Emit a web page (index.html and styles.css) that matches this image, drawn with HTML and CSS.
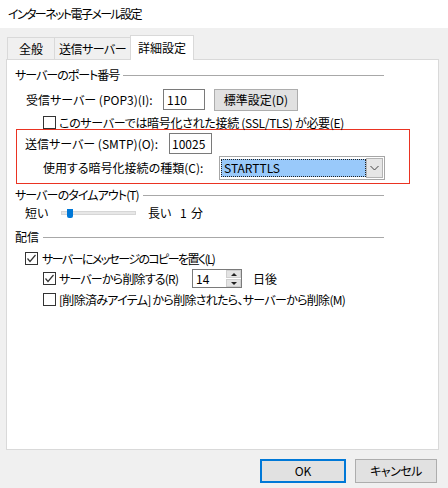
FILE: index.html
```html
<!DOCTYPE html>
<html lang="ja">
<head>
<meta charset="utf-8">
<title>インターネット電子メール設定</title>
<link rel="stylesheet" href="styles.css">
</head>
<body>
<div class="window">
  <div class="titlebar">インターネット電子メール設定</div>
  <div class="tabs">
    <div class="tab tab-general">全般</div>
    <div class="tab tab-send">送信サーバー</div>
    <div class="tab tab-adv active">詳細設定</div>
  </div>
  <div class="panel">
    <div class="gh gh-port"><span>サーバーのポート番号</span><i class="rule"></i></div>
    <div class="row row-pop">
      <span class="lbl lbl-pop">受信サーバー (POP3)(I):</span>
      <div class="txt txt-pop">110</div>
      <div class="btn btn-std">標準設定(D)</div>
    </div>
    <div class="row row-ssl">
      <span class="cb"></span><span class="cbl">このサーバーでは暗号化された接続 (SSL/TLS) が必要(E)</span>
    </div>
    <div class="redbox">
      <div class="row row-smtp">
        <span class="lbl lbl-smtp">送信サーバー (SMTP)(O):</span>
        <div class="txt txt-smtp">10025</div>
      </div>
      <div class="row row-enc">
        <span class="lbl lbl-enc">使用する暗号化接続の種類(C):</span>
        <div class="select">
          <div class="sel-field">STARTTLS</div>
          <div class="sel-btn"><svg width="9" height="6" viewBox="0 0 9 6"><polyline points="0.5,1 4.5,5 8.5,1" fill="none" stroke="#444" stroke-width="1"/></svg></div>
        </div>
      </div>
    </div>
    <div class="gh gh-timeout"><span>サーバーのタイムアウト(T)</span><i class="rule"></i></div>
    <div class="row row-slider">
      <span class="lbl lbl-short">短い</span>
      <div class="track"><span class="thumb"></span></div>
      <span class="lbl lbl-long">長い</span>
      <span class="lbl lbl-one">1</span>
      <span class="lbl lbl-min">分</span>
    </div>
    <div class="gh gh-deliv"><span>配信</span><i class="rule"></i></div>
    <div class="row row-copy">
      <span class="cb checked"><svg width="11" height="11" viewBox="0 0 11 11"><polyline points="1.5,5.5 4,8.5 9.5,2" fill="none" stroke="#333" stroke-width="1.2"/></svg></span><span class="cbl">サーバーにメッセージのコピーを置く(L)</span>
    </div>
    <div class="row row-del">
      <span class="cb checked"><svg width="11" height="11" viewBox="0 0 11 11"><polyline points="1.5,5.5 4,8.5 9.5,2" fill="none" stroke="#333" stroke-width="1.2"/></svg></span><span class="cbl cbl-del">サーバーから削除する(R)</span>
      <div class="spin">
        <div class="spin-val">14</div>
        <div class="spin-btns">
          <div class="spin-b"><i class="tri-up"></i></div>
          <div class="spin-b"><i class="tri-down"></i></div>
        </div>
      </div>
      <span class="lbl lbl-days">日後</span>
    </div>
    <div class="row row-trash">
      <span class="cb"></span><span class="cbl">[削除済みアイテム] から削除されたら、サーバーから削除(M)</span>
    </div>
  </div>
  <div class="footer">
    <div class="btn btn-ok">OK</div>
    <div class="btn btn-cancel">キャンセル</div>
  </div>
</div>
</body>
</html>
```
FILE: styles.css
```css
html, body {
  margin: 0;
  padding: 0;
}
body {
  width: 448px;
  height: 488px;
  overflow: hidden;
  background: #f0f0f0;
  color: #000;
  font-family: "Noto Sans CJK JP", sans-serif;
  font-size: 12px;
  line-height: 16px;
  font-feature-settings: "palt";
}
.window {
  width: 448px;
  height: 488px;
}
.titlebar {
  height: 28px;
  line-height: 28px;
  background: #fff;
  padding-left: 8px;
  letter-spacing: -1.6px;
}
.tabs {
  display: flex;
  align-items: flex-end;
  height: 24px;
  margin-top: 7px;
  padding-left: 7px;
}
.tab {
  box-sizing: border-box;
  height: 22px;
  border: 1px solid #d9d9d9;
  border-bottom: none;
  background: #f0f0f0;
  display: flex;
  align-items: center;
  justify-content: center;
}
.tab + .tab {
  margin-left: -1px;
}
.tab-general { width: 48px; }
.tab-send { width: 77px; letter-spacing: -0.5px; }
.tab-adv { width: 64px; }
.tab.active {
  height: 25px;
  margin-bottom: -1px;
  background: #fff;
  position: relative;
  z-index: 1;
}
.panel {
  box-sizing: border-box;
  margin-left: 6px;
  width: 433px;
  height: 391px;
  border: 1px solid #d9d9d9;
  background: #fff;
}
.gh {
  display: flex;
  align-items: center;
  height: 16px;
  padding-left: 8px;
  margin-right: 54px;
}
.gh .rule {
  flex: 1;
  height: 1px;
  background: #a8a8a8;
  margin-left: 4px;
}
.gh-port { margin-top: 7px; letter-spacing: -1px; }
.gh-timeout { margin-top: 3px; letter-spacing: -0.9px; }
.gh-deliv { margin-top: 8px; }

.row {
  display: flex;
  align-items: center;
}
.lbl {
  white-space: nowrap;
}
.row-pop {
  height: 22px;
  margin-top: 6px;
  padding-left: 19px;
  align-items: flex-start;
}
.lbl-pop {
  width: 137px;
  line-height: 21px;
}
.txt {
  box-sizing: border-box;
  height: 21px;
  border: 1px solid #7a7a7a;
  background: #fff;
  line-height: 19px;
  padding-left: 3px;
}
.txt-pop { width: 42px; }
.btn {
  box-sizing: border-box;
  border: 1px solid #adadad;
  background: #e1e1e1;
  display: flex;
  align-items: center;
  justify-content: center;
}
.btn-std {
  width: 84px;
  height: 22px;
  margin-left: 9px;
}
.row-ssl {
  height: 13px;
  margin-top: 5px;
  padding-left: 36px;
}
.row-ssl .cbl { letter-spacing: -0.3px; }
.cb {
  box-sizing: border-box;
  width: 13px;
  height: 13px;
  flex: none;
  border: 1px solid #333;
  background: #fff;
  display: flex;
  align-items: center;
  justify-content: center;
}
.cbl {
  margin-left: 3px;
  white-space: nowrap;
}
.redbox {
  box-sizing: border-box;
  margin-left: 9px;
  width: 394px;
  height: 55px;
  border: 1px solid #ea3322;
}
.row-smtp {
  height: 21px;
  margin-top: 3px;
  padding-left: 8px;
}
.lbl-smtp { width: 144px; }
.txt-smtp {
  width: 43px;
  padding-left: 2px;
}
.row-enc {
  height: 24px;
  margin-top: 2px;
  padding-left: 26px;
}
.lbl-enc { width: 176px; }
.select {
  box-sizing: border-box;
  width: 166px;
  height: 24px;
  border: 1px solid #a6a6a6;
  padding: 1px 0 1px 1px;
  display: flex;
  background: #fff;
}
.sel-field {
  box-sizing: border-box;
  width: 145px;
  height: 18px;
  margin-top: 1px;
  background: #99c9fa;
  border: 1px dotted #222;
  line-height: 16px;
  padding-left: 2px;
}
.sel-btn {
  box-sizing: border-box;
  width: 17px;
  height: 20px;
  border: 1px solid #b4b4b4;
  background: #e6e6e6;
  display: flex;
  align-items: center;
  justify-content: center;
}
.row-slider {
  height: 16px;
  margin-top: 2px;
  padding-left: 18px;
}
.lbl-short { width: 36px; }
.track {
  box-sizing: border-box;
  position: relative;
  width: 75px;
  height: 4px;
  background: #e7e7e7;
  border: 1px solid #d6d6d6;
}
.thumb {
  position: absolute;
  left: 5px;
  top: -3px;
  width: 6px;
  height: 9px;
  background: #0078d7;
  border-radius: 0 0 2px 2px;
}
.lbl-long {
  margin-left: 12px;
  width: 32px;
}
.lbl-one { width: 11px; }
.row-copy {
  height: 13px;
  margin-top: 7px;
  padding-left: 18px;
}
.row-copy .cbl { margin-left: 4px; letter-spacing: -1.6px; }
.row-del {
  height: 19px;
  margin-top: 4px;
  padding-left: 36px;
}
.cbl-del { width: 133px; letter-spacing: -0.8px; }
.spin {
  box-sizing: border-box;
  width: 50px;
  height: 19px;
  border: 1px solid #7a7a7a;
  background: #fff;
  display: flex;
}
.spin-val {
  flex: 1;
  padding-left: 3px;
  line-height: 17px;
}
.spin-btns {
  width: 15px;
  display: flex;
  flex-direction: column;
  gap: 1px;
  background: #fff;
}
.spin-b {
  flex: 1;
  background: #e3e3e3;
  border: 1px solid #cfcfcf;
  display: flex;
  align-items: center;
  justify-content: center;
}
.tri-up {
  width: 0;
  height: 0;
  border-left: 3px solid transparent;
  border-right: 3px solid transparent;
  border-bottom: 3px solid #222;
}
.tri-down {
  width: 0;
  height: 0;
  border-left: 3px solid transparent;
  border-right: 3px solid transparent;
  border-top: 3px solid #222;
}
.lbl-days { margin-left: 11px; }
.row-trash {
  height: 13px;
  margin-top: 5px;
  padding-left: 36px;
}
.row-trash .cbl { letter-spacing: -0.7px; }
.footer {
  display: flex;
  justify-content: flex-end;
  gap: 9px;
  margin-top: 9px;
  padding-right: 11px;
}
.btn-ok {
  width: 86px;
  height: 24px;
  border: 2px solid #0078d7;
}
.btn-cancel {
  width: 82px;
  height: 24px;
  letter-spacing: -0.5px;
}
```
